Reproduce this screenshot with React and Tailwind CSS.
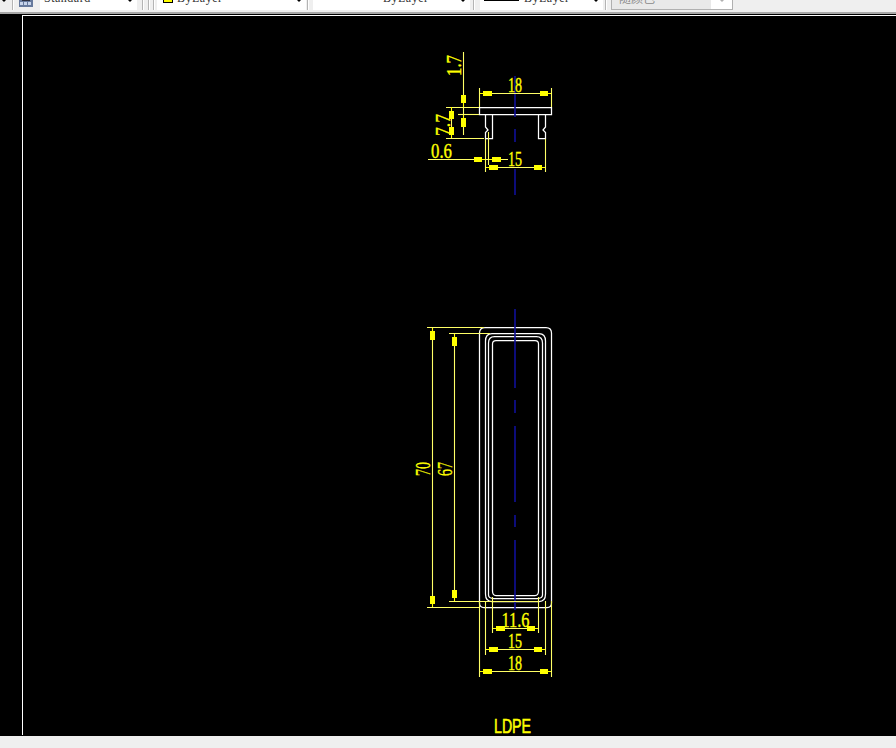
const Y = "#ffff00";
const DIM = "#ffff66";

function Arrow({ x, y, dir }) {
  // tip at x,y; dir = where the tip points; thin needle, then a heavy body
  const body = [[0, 0], [3.5, 0.8], [4, 2.6], [12, 2.4], [12, -2.4], [4, -2.6], [3.5, -0.8]];
  const map = {
    l: ([a, b]) => [x + a, y + b],
    r: ([a, b]) => [x - a, y + b],
    u: ([a, b]) => [x + b, y + a],
    d: ([a, b]) => [x + b, y - a],
  }[dir];
  return <polygon points={body.map(map).map((p) => p.join(",")).join(" ")} fill={Y} shapeRendering="crispEdges" />;
}

function Label({ x, y, w, size = 20, rot, children, family = '"Liberation Serif", serif', heavy = 0.35 }) {
  return (
    <text
      x={rot ? 0 : x}
      y={rot ? 0 : y}
      transform={rot ? `translate(${x} ${y}) rotate(-90)` : undefined}
      fill={Y}
      stroke={Y}
      strokeWidth={heavy}
      fontFamily={family}
      fontSize={size}
      textLength={w}
      lengthAdjust="spacingAndGlyphs"
    >
      {children}
    </text>
  );
}

const dimLines = [
  // top detail
  "M479.5 88V107", "M551.5 88V107", "M479.5 93.5H551.5",
  "M463.5 52V135", "M446 107.5H479", "M458 114.5H479",
  "M451.5 107V138", "M446 138.5H484",
  "M428 159.5H508", "M485.5 139V172", "M488.5 132V165", "M545.5 139V172", "M485.5 167.5H545.5",
  // lower detail
  "M427 607.5H480", "M449 601.5H538", "M432.5 327.5V607", "M454.5 333.5V601",
  "M427 327.5H484", "M449 333.5H490",
  "M479.5 601V677", "M551.5 601V677", "M485.5 601V655", "M545.5 601V655",
  "M492.5 597V633", "M538.5 597V633",
  "M492.5 628.5H538.5", "M485.5 649.5H545.5", "M479.5 671.5H551.5",
];

const whiteLines = [
  // top detail
  "M479.5 107.5H551.5V114.5H479.5Z",
  "M485.5 114.5V127L488 130L485.5 132.5V138.5H492.5V114.5",
  "M545.5 114.5V127L543 130L545.5 132.5V138.5H538.5V114.5",
  // lower detail
  "M479.5 333Q479.5 327.5 485 327.5H546Q551.5 327.5 551.5 333V603Q551.5 607.5 547 607.5H484Q479.5 607.5 479.5 603Z",
  "M485.5 341Q485.5 333.5 492 333.5H539Q545.5 333.5 545.5 341V594Q545.5 601.5 539 601.5H492Q485.5 601.5 485.5 594Z",
  "M488.5 595V343Q488.5 336.5 494.5 336.5H536.5Q542.5 336.5 542.5 343V595Q542.5 598.5 537 598.5H494Q488.5 598.5 488.5 595Z",
  "M492.5 344Q492.5 340.5 496 340.5H535Q538.5 340.5 538.5 344V591Q538.5 595.5 535 595.5H496Q492.5 595.5 492.5 591Z",
];

const blueLines = [
  "M515 76V117", "M515 129V142", "M515 169V195",
  "M515 309V388", "M515 400V413", "M515 426V502", "M515 515V527", "M515 540V610",
];

function Drawing() {
  return (
    <svg viewBox="23 16 873 719" className="block w-[873px] h-[719px]">
      <g fill="none" stroke="#ffffff" strokeWidth="1.25">
        {whiteLines.map((d) => <path key={d} d={d} />)}
      </g>
      <g fill="none" stroke="#10109a" strokeWidth="1.6">
        {blueLines.map((d) => <path key={d} d={d} />)}
      </g>
      <g fill="none" stroke={DIM} strokeWidth="1.1">
        {dimLines.map((d) => <path key={d} d={d} />)}
      </g>

      <Arrow x={479.5} y={93.5} dir="l" />
      <Arrow x={551.5} y={93.5} dir="r" />
      <Arrow x={463.5} y={107} dir="d" />
      <Arrow x={463.5} y={114.5} dir="u" />
      <Arrow x={451.5} y={107} dir="u" />
      <Arrow x={451.5} y={138.5} dir="d" />
      <Arrow x={485.5} y={159.5} dir="r" />
      <Arrow x={488.5} y={159.5} dir="l" />
      <Arrow x={485.5} y={167.5} dir="l" />
      <Arrow x={545.5} y={167.5} dir="r" />

      <Arrow x={432.5} y={327.5} dir="u" />
      <Arrow x={432.5} y={607.5} dir="d" />
      <Arrow x={454.5} y={333.5} dir="u" />
      <Arrow x={454.5} y={601.5} dir="d" />
      <Arrow x={492.5} y={628.5} dir="l" />
      <Arrow x={538.5} y={628.5} dir="r" />
      <Arrow x={485.5} y={649.5} dir="l" />
      <Arrow x={545.5} y={649.5} dir="r" />
      <Arrow x={479.5} y={671.5} dir="l" />
      <Arrow x={551.5} y={671.5} dir="r" />

      <Label x={508} y={92} w={14}>18</Label>
      <Label x={508} y={166} w={14}>15</Label>
      <Label x={431} y={158} w={21}>0.6</Label>
      <Label x={461} y={76} w={21} size={21} rot>1.7</Label>
      <Label x={450} y={136} w={22} size={21} rot>7.7</Label>
      <Label x={430} y={476} w={14} size={22} rot>70</Label>
      <Label x={452} y={476} w={14} size={22} rot>67</Label>
      <Label x={501.5} y={627} w={28} size={21}>11.6</Label>
      <Label x={508} y={648} w={14}>15</Label>
      <Label x={508} y={670} w={14}>18</Label>
      <Label x={494} y={733} w={37} size={21} heavy={0.6} family='"Liberation Sans", sans-serif'>LDPE</Label>
    </svg>
  );
}

function Caret() {
  return <div className="w-0 h-0 mb-[8px] border-x-[3px] border-x-transparent border-t-[3px] border-t-black" />;
}

function Sep({ className = "" }) {
  return <div className={`h-[10px] mb-0 w-[2px] border-l border-[#b4b4b4] bg-white ${className}`} />;
}

function Combo({ className = "", children }) {
  return (
    <div className={`h-[22px] bg-white flex items-end justify-between pr-[4px] ${className}`}>
      {children}
      <Caret />
    </div>
  );
}

function ComboText({ className = "", children }) {
  return (
    <span className={`text-[12px] leading-none mb-[6px] tracking-[0.5px] text-[#333333] font-['Liberation_Serif',serif] ${className}`}>
      {children}
    </span>
  );
}

export default function App() {
  return (
    <div className="w-[896px] h-[748px] flex flex-col overflow-hidden bg-[#efefef]">
      <div className="h-[14px] shrink-0 overflow-hidden bg-[#efefef] border-b-2 border-[#a8a8a8] pb-[2px]">
        <div className="h-[10px] flex items-end">
          <div className="w-[7px] flex justify-end"><Caret /></div>
          <Sep className="ml-[5px]" />
          <svg width="14" height="11" viewBox="0 0 14 11" className="ml-[5px] mb-[3px] shrink-0">
            <rect width="14" height="11" fill="#66799c" />
            <rect x="3" y="0" width="8" height="5" fill="#2b2f3f" />
            <rect x="1" y="6" width="3" height="3" fill="#c6d3ea" />
            <rect x="5" y="6" width="3" height="3" fill="#c6d3ea" />
            <rect x="9" y="6" width="3" height="3" fill="#c6d3ea" />
          </svg>
          <Combo className="ml-[7px] w-[97px] pl-[4px]">
            <ComboText>Standard</ComboText>
          </Combo>
          <Sep className="ml-[5px]" />
          <Sep className="ml-[4px]" />
          <Sep className="ml-[3px]" />
          <Combo className="ml-[2px] w-[149px] pl-[6px]">
            <div className="flex items-end gap-[4px]">
              <div className="w-[10px] h-[10px] mb-[7px] bg-[#ffff00] border border-black" />
              <ComboText>ByLayer</ComboText>
            </div>
          </Combo>
          <Sep className="ml-[1px]" />
          <Combo className="ml-[4px] w-[157px] pl-[70px]">
            <ComboText>ByLayer</ComboText>
          </Combo>
          <Sep className="ml-[3px]" />
          <Combo className="ml-[5px] w-[123px] pl-[4px]">
            <div className="flex items-end gap-[5px]">
              <div className="w-[35px] h-px mb-[9px] bg-black" />
              <ComboText>ByLayer</ComboText>
            </div>
          </Combo>
          <Sep className="ml-[2px]" />
          <div className="ml-[4px] w-[122px] h-[22px] flex items-end border border-[#b0b0b0] bg-white">
            <div className="w-[99px] h-full bg-[#e9e9e9] pl-[7px] flex items-end">
              <span className="text-[12px] leading-none mb-[5px] text-[#8a8a8a] font-['Noto_Sans_CJK_SC',sans-serif]">随颜色</span>
            </div>
            <div className="flex-1 flex justify-center">
              <div className="w-0 h-0 mb-[7px] border-x-[3px] border-x-transparent border-t-[3px] border-t-[#b0b0b0]" />
            </div>
          </div>
        </div>
      </div>
      <div className="h-[722px] shrink-0 bg-black pl-[22px] pt-[1px] pb-[1px] overflow-hidden">
        <div className="h-[720px] border-l border-t border-white overflow-hidden">
          <Drawing />
        </div>
      </div>
      <div className="flex-1 bg-[#efefef]" />
    </div>
  );
}
